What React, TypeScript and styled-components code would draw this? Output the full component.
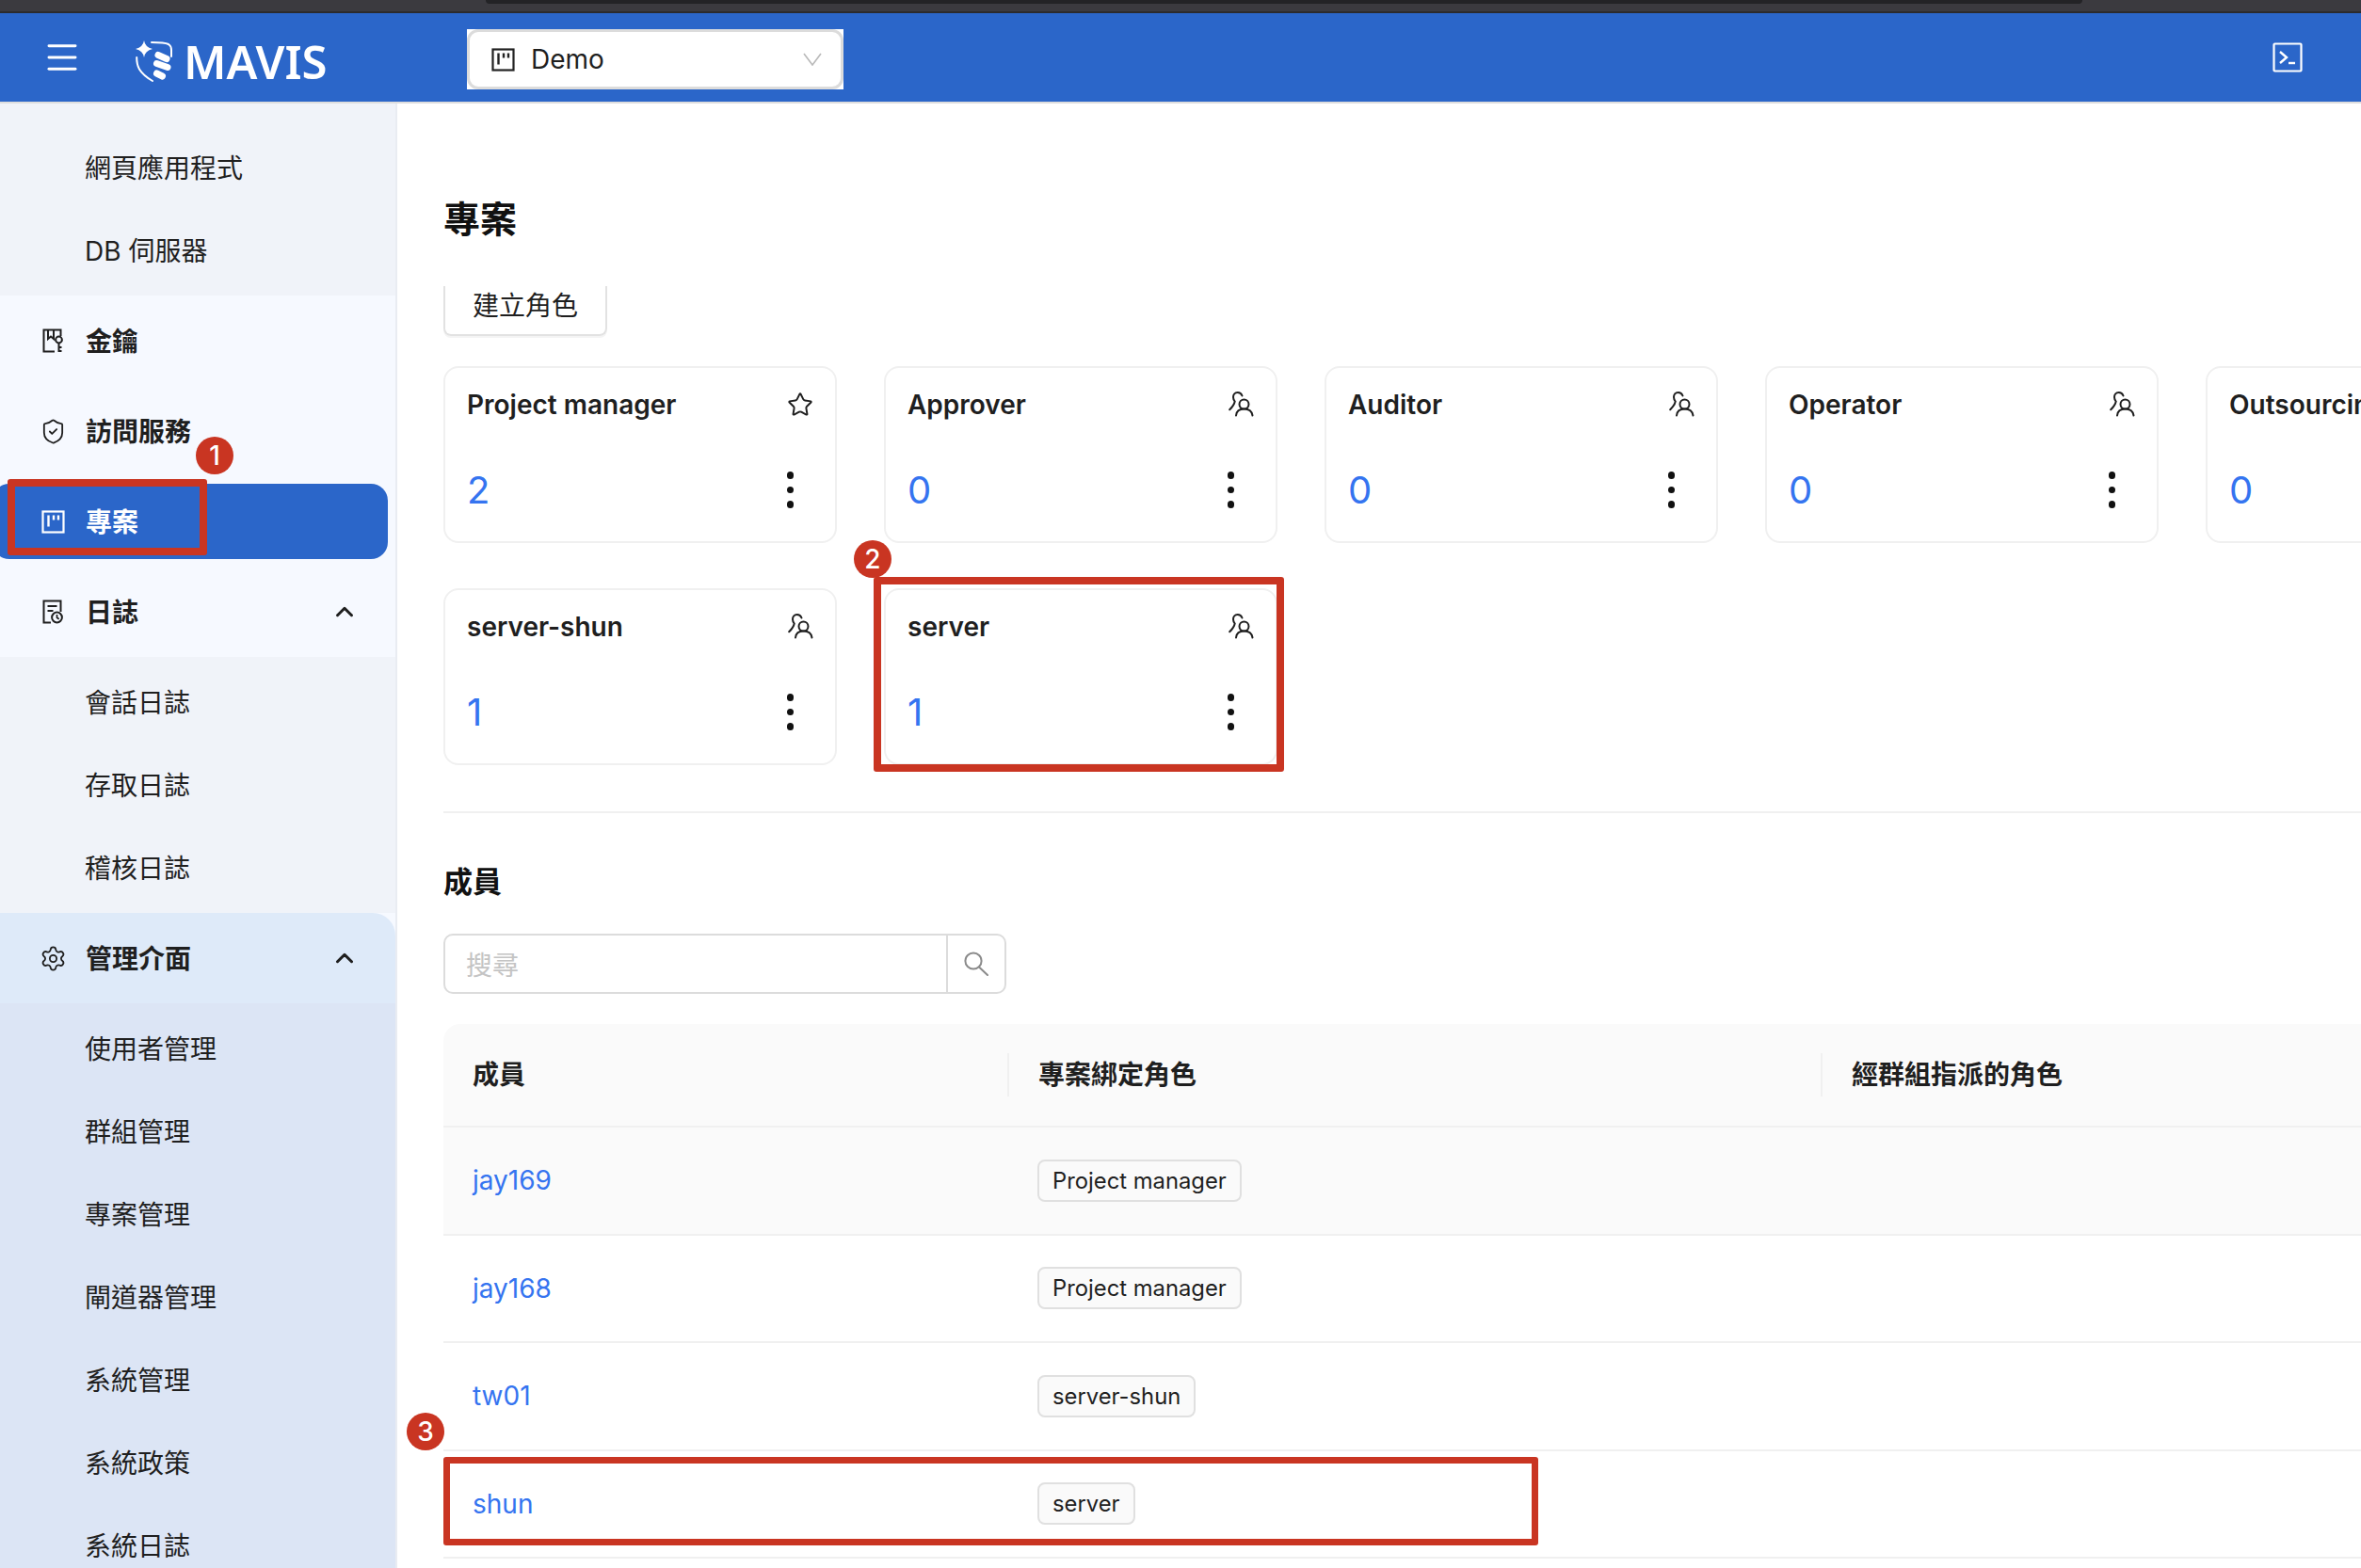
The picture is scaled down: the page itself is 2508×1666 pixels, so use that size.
import React from "react";
import styled, { createGlobalStyle } from "styled-components";
import { ChevronUp, Menu, Settings, ShieldCheck, Star } from "lucide-react";

const GlobalStyle = createGlobalStyle`
  html, body {
    margin: 0;
    padding: 0;
    background: #fff;
    font-family: Inter, "Noto Sans CJK TC", sans-serif;
    color: #1f1f1f;
  }
  * { box-sizing: border-box; }
`;

const Page = styled.div`
  width: 2508px;
  height: 1666px;
  overflow: hidden;
  display: flex;
  flex-direction: column;
`;

const Chrome = styled.div`
  height: 14px;
  flex: none;
  background: #3b3a3f;
  border-bottom: 2px solid #2b2b2d;
  padding: 0 296px 0 516px;
`;

const ChromeTab = styled.div`
  height: 4px;
  background: #232326;
  border-radius: 0 0 6px 6px;
`;

const Header = styled.header`
  height: 96px;
  flex: none;
  display: flex;
  align-items: center;
  background: #2b66c9;
  border-bottom: 2px solid #dedede;
  padding-left: 45px;
  padding-right: 62px;
  color: #fff;
`;

const Logo = styled.div`
  display: flex;
  align-items: center;
  gap: 12px;
  margin-left: 57px;
  width: 352px;
  padding-top: 8px;
`;

const LogoText = styled.span`
  font-family: "Noto Sans", sans-serif;
  font-size: 49px;
  font-weight: 600;
  line-height: 1;
  color: #fff;
`;

const SelectFrame = styled.div`
  width: 400px;
  height: 64px;
  margin-top: 4px;
  background: #fff;
`;

const SelectBox = styled.div`
  height: 100%;
  border: 3px solid #dcdcdc;
  border-radius: 12px;
  display: flex;
  align-items: center;
  padding: 0 20px 0 23px;
  gap: 17px;
  color: #1f1f1f;
  font-size: 28px;
`;

const SelectText = styled.span`
  flex: 1;
`;

const TerminalWrap = styled.div`
  margin-left: auto;
  display: flex;
`;

const Body = styled.div`
  flex: 1;
  display: flex;
  min-height: 0;
`;

const Side = styled.aside`
  width: 422px;
  flex: none;
  background: #f6f9ff;
  border-right: 2px solid #e9ecf2;
  overflow: hidden;
`;

const SubGroup = styled.div<{ $first?: boolean; $admin?: boolean }>`
  background: ${(p) => (p.$admin ? "#dce5f5" : "#f0f3f9")};
  padding: ${(p) => (p.$first ? "24px" : "4px")} 0 4px;
`;

const SubItem = styled.div`
  height: 88px;
  display: flex;
  align-items: center;
  padding: 0 0 2px 90px;
  font-size: 28px;
  color: #1f1f1f;
`;

const NavItem = styled.div<{ $active?: boolean; $open?: boolean }>`
  position: relative;
  height: ${(p) => (p.$active ? "80px" : "96px")};
  margin: ${(p) => (p.$active ? "8px 8px 8px -8px" : "0")};
  padding-left: ${(p) => (p.$active ? "53px" : "45px")};
  padding-right: 39px;
  display: flex;
  align-items: center;
  gap: 24px;
  font-size: 28px;
  font-weight: 600;
  color: ${(p) => (p.$active ? "#fff" : "#1f1f1f")};
  background: ${(p) => (p.$active ? "#2b66c9" : p.$open ? "#deeaf9" : "transparent")};
  border-radius: ${(p) => (p.$active ? "18px" : p.$open ? "0 24px 0 0" : "0")};
`;

const NavIcon = styled.span`
  width: 22px;
  height: 28px;
  flex: none;
  display: flex;
  align-items: center;
  justify-content: center;
  svg {
    flex: none;
  }
`;

const NavLabel = styled.span`
  flex: 1;
  padding-bottom: 2px;
`;

const Main = styled.main`
  flex: 1;
  min-width: 0;
  overflow: hidden;
  padding: 103px 0 0 49px;
`;

const Title = styled.h1`
  margin: 0;
  font-size: 39px;
  line-height: 40px;
  font-weight: 700;
  color: #111;
`;

const CutButton = styled.div`
  width: 174px;
  height: 53px;
  margin-top: 51px;
  border: 2px solid #e2e2e2;
  border-top: none;
  border-radius: 0 0 8px 8px;
  display: flex;
  align-items: center;
  justify-content: center;
  font-size: 28px;
  padding-bottom: 14px;
  color: #1f1f1f;
  box-shadow: 0 2px 0 #f4f4f4;
`;

const CardGrid = styled.div`
  display: grid;
  grid-template-columns: repeat(5, 418px);
  grid-auto-rows: 188px;
  gap: 48px 50px;
  margin-top: 32px;
`;

const Card = styled.div`
  position: relative;
  border: 2px solid #f0f0f0;
  border-radius: 16px;
  padding: 18.5px 23px 0 23px;
  display: flex;
  flex-direction: column;
  background: #fff;
`;

const CardTop = styled.div`
  display: flex;
  align-items: center;
  justify-content: space-between;
  height: 40px;
`;

const CardName = styled.span`
  font-size: 28px;
  font-weight: 600;
  white-space: nowrap;
  color: #1f1f1f;
`;

const CardBottom = styled.div`
  display: flex;
  align-items: center;
  justify-content: space-between;
  margin-top: 39px;
  height: 64px;
`;

const CardCount = styled.span`
  font-size: 40px;
  font-weight: 400;
  color: #3574f0;
`;

const Kebab = styled.span`
  display: flex;
  flex-direction: column;
  gap: 8px;
  margin-right: 21px;
`;

const Dot = styled.i`
  width: 7.5px;
  height: 7.5px;
  border-radius: 50%;
  background: #111;
  display: block;
`;

const Divider = styled.div`
  height: 2px;
  background: #f0f0f0;
  margin-top: 49px;
`;

const SectionTitle = styled.h2`
  margin: 53px 0 0;
  font-size: 31px;
  line-height: 40px;
  font-weight: 700;
  color: #111;
`;

const SearchBox = styled.div`
  width: 598px;
  height: 64px;
  margin-top: 35px;
  border: 2px solid #dcdcdc;
  border-radius: 10px;
  display: flex;
  align-items: stretch;
`;

const SearchInput = styled.div`
  flex: 1;
  display: flex;
  align-items: center;
  padding-left: 22px;
  font-size: 28px;
  color: #c4c4c4;
  border-right: 2px solid #dcdcdc;
`;

const SearchButton = styled.div`
  width: 60px;
  display: flex;
  align-items: center;
  justify-content: center;
  color: #8a8a8a;
`;

const Table = styled.div`
  margin-top: 32px;
`;

const cols = "599px 864px 1fr";

const HeadRow = styled.div`
  height: 110px;
  display: grid;
  grid-template-columns: ${cols};
  align-items: center;
  background: #fafafa;
  border-bottom: 2px solid #f0f0f0;
  border-top-left-radius: 18px;
`;

const HeadCell = styled.div<{ $sep?: boolean }>`
  position: relative;
  padding-left: 31px;
  font-size: 28px;
  font-weight: 600;
  line-height: 46px;
  ${(p) => (p.$sep ? "border-left: 2px solid #f0f0f0;" : "")}
`;

const Row = styled.div<{ $hover?: boolean }>`
  position: relative;
  height: 114.5px;
  display: grid;
  grid-template-columns: ${cols};
  align-items: center;
  background: ${(p) => (p.$hover ? "#fafafa" : "#fff")};
  border-bottom: 2px solid #f0f0f0;
`;

const MemberLink = styled.a`
  padding-left: 31px;
  font-size: 28px;
  color: #3574f0;
`;

const TagCell = styled.div`
  padding-left: 32px;
`;

const Tag = styled.span`
  display: inline-flex;
  align-items: center;
  height: 45px;
  padding: 0 14px;
  font-size: 23.8px;
  background: #fafafa;
  border: 2px solid #e0e0e0;
  border-radius: 8px;
  color: #1f1f1f;
`;

const MarkBox = styled.div<{ $kind: "nav" | "card" | "row" }>`
  position: absolute;
  border: ${(p) => (p.$kind === "row" ? "7px" : "8px")} solid #c93522;
  border-radius: 3px;
  pointer-events: none;
  ${(p) =>
    p.$kind === "nav"
      ? "left: 16px; top: -5px; width: 212px; height: 81px;"
      : p.$kind === "card"
      ? "left: -13px; top: -14px; width: 436px; height: 207px;"
      : "left: 0; top: 6.5px; width: 1163px; height: 94px;"}
`;

const MarkBadge = styled.span<{ $kind: "nav" | "card" | "row" }>`
  position: absolute;
  width: 40px;
  height: 40px;
  border-radius: 50%;
  background: #c93522;
  color: #fff;
  font-size: 28px;
  font-weight: 500;
  display: flex;
  align-items: center;
  justify-content: center;
  ${(p) =>
    p.$kind === "nav"
      ? "left: 216px; top: -50px;"
      : p.$kind === "card"
      ? "left: -34px; top: -53px;"
      : "left: -39px; top: -41px;"}
`;

const ProjectIcon = ({ color = "currentColor" }: { color?: string }) => (
  <svg width="25" height="25" viewBox="0 0 25 25" fill="none" stroke={color} strokeWidth="2.2" style={{ flex: "none" }}>
    <rect x="1.5" y="1.5" width="22" height="22" />
    <path d="M7.5 5.5v12M13 5.5v5M18 5.5v5" strokeWidth="2.4" />
  </svg>
);

const SelectChevron = () => (
  <svg width="20" height="14" viewBox="0 0 20 14" fill="none" stroke="#b9b9b9" strokeWidth="1.6" style={{ flex: "none" }}>
    <path d="M1 1l9 12 9-12" />
  </svg>
);

const TerminalIcon = () => (
  <svg width="32" height="32" viewBox="0 0 32 32" fill="none" stroke="#fff" strokeWidth="2.2">
    <rect x="1.5" y="1.5" width="29" height="29" rx="1" />
    <path d="M8 10l7 6-7 6" strokeWidth="2.4" />
    <path d="M17 22h7" strokeWidth="2.4" />
  </svg>
);

const KeyIcon = () => (
  <svg width="22" height="26" viewBox="0 0 22 26" fill="none" stroke="#1f1f1f" strokeWidth="2">
    <path d="M13 24.5H1.5V1.5H19.5V8" />
    <path d="M6 1.5V11L9 8.5L12 11V1.5" />
    <circle cx="17.5" cy="12" r="3.4" />
    <path d="M17.5 15.5V25M17.5 20h3M17.5 24h3" />
  </svg>
);

const LogIcon = () => (
  <svg width="22" height="26" viewBox="0 0 22 26" fill="none" stroke="#1f1f1f" strokeWidth="2">
    <path d="M9 24.5H1.5V1.5H19.5V13" />
    <path d="M5.5 7h10M5.5 12h6" />
    <circle cx="15.5" cy="19" r="5.4" />
    <path d="M15.5 16v3.2l2.2 1.6" strokeWidth="1.7" />
  </svg>
);

const RoleIcon = () => (
  <svg width="27" height="27" viewBox="0 0 27 27" fill="none" stroke="#1f1f1f" strokeWidth="2" strokeLinecap="round">
    <circle cx="16.5" cy="13.5" r="5" />
    <path d="M8 25.5c.4-4.6 3.6-7 8.5-7s8.4 2.4 9 7" />
    <path d="M14.5 4.5C13.5 2 11.5 1 9.7 1 6.5 1 5 3.5 5 6c0 2 .8 3.3 1.7 4.5C6 14.5 3.5 17 1.2 19.3" />
  </svg>
);

const SearchIcon = () => (
  <svg width="26" height="26" viewBox="0 0 26 26" fill="none" stroke="currentColor" strokeWidth="2" strokeLinecap="round">
    <circle cx="10" cy="10" r="8.6" />
    <path d="M16 16.5L25 25" />
  </svg>
);

const MavisMark = () => (
  <svg width="39" height="44" viewBox="0 0 39 44" fill="none" stroke="#fff" strokeLinecap="round" style={{ flex: "none" }}>
    <path d="M9 0Q10 7 18 9Q10 11 9 18Q8 11 0 9Q8 7 9 0Z" fill="#fff" stroke="none" />
    <path d="M17 2C24 2 32 2.5 35 4C37.5 5.5 38 7 38 10V17" strokeWidth="2" />
    <path d="M1.2 18C1.2 23 2 27 4 30.5C7 35.5 12 39.5 18 43" strokeWidth="2" />
    <path d="M24 15.5L33 19.5M22.5 24.5L34 28.5M22.5 35L28.5 38" strokeWidth="7" />
  </svg>
);

type Role = { name: string; count: number; star?: boolean; marked?: boolean };

const roles: Role[] = [
  { name: "Project manager", count: 2, star: true },
  { name: "Approver", count: 0 },
  { name: "Auditor", count: 0 },
  { name: "Operator", count: 0 },
  { name: "Outsourcing", count: 0 },
  { name: "server-shun", count: 1 },
  { name: "server", count: 1, marked: true },
];

const members = [
  { name: "jay169", role: "Project manager", hover: true },
  { name: "jay168", role: "Project manager" },
  { name: "tw01", role: "server-shun" },
  { name: "shun", role: "server", marked: true },
];

const logItems = ["會話日誌", "存取日誌", "稽核日誌"];
const adminItems = ["使用者管理", "群組管理", "專案管理", "閘道器管理", "系統管理", "系統政策", "系統日誌"];

export default function App() {
  return (
    <Page>
      <GlobalStyle />
      <Chrome>
        <ChromeTab />
      </Chrome>
      <Header>
        <Menu size={42} strokeWidth={1.7} color="#fff" />
        <Logo>
          <MavisMark />
          <LogoText>MAVIS</LogoText>
        </Logo>
        <SelectFrame>
          <SelectBox>
            <ProjectIcon color="#222" />
            <SelectText>Demo</SelectText>
            <SelectChevron />
          </SelectBox>
        </SelectFrame>
        <TerminalWrap>
          <TerminalIcon />
        </TerminalWrap>
      </Header>
      <Body>
        <Side>
          <SubGroup $first>
            <SubItem>網頁應用程式</SubItem>
            <SubItem>DB 伺服器</SubItem>
          </SubGroup>
          <NavItem>
            <NavIcon>
              <KeyIcon />
            </NavIcon>
            <NavLabel>金鑰</NavLabel>
          </NavItem>
          <NavItem>
            <NavIcon>
              <ShieldCheck size={29} strokeWidth={1.5} />
            </NavIcon>
            <NavLabel>訪問服務</NavLabel>
          </NavItem>
          <NavItem $active>
            <NavIcon>
              <ProjectIcon color="#fff" />
            </NavIcon>
            <NavLabel>專案</NavLabel>
            <MarkBox $kind="nav" />
            <MarkBadge $kind="nav">1</MarkBadge>
          </NavItem>
          <NavItem>
            <NavIcon>
              <LogIcon />
            </NavIcon>
            <NavLabel>日誌</NavLabel>
            <ChevronUp size={30} strokeWidth={2.4} />
          </NavItem>
          <SubGroup>
            {logItems.map((item) => (
              <SubItem key={item}>{item}</SubItem>
            ))}
          </SubGroup>
          <NavItem $open>
            <NavIcon>
              <Settings size={29} strokeWidth={1.5} />
            </NavIcon>
            <NavLabel>管理介面</NavLabel>
            <ChevronUp size={30} strokeWidth={2.4} />
          </NavItem>
          <SubGroup $admin>
            {adminItems.map((item) => (
              <SubItem key={item}>{item}</SubItem>
            ))}
          </SubGroup>
        </Side>
        <Main>
          <Title>專案</Title>
          <CutButton>建立角色</CutButton>
          <CardGrid>
            {roles.map((role) => (
              <Card key={role.name}>
                <CardTop>
                  <CardName>{role.name}</CardName>
                  {role.star ? <Star size={28} strokeWidth={1.7} /> : <RoleIcon />}
                </CardTop>
                <CardBottom>
                  <CardCount>{role.count}</CardCount>
                  <Kebab>
                    <Dot />
                    <Dot />
                    <Dot />
                  </Kebab>
                </CardBottom>
                {role.marked && (
                  <>
                    <MarkBox $kind="card" />
                    <MarkBadge $kind="card">2</MarkBadge>
                  </>
                )}
              </Card>
            ))}
          </CardGrid>
          <Divider />
          <SectionTitle>成員</SectionTitle>
          <SearchBox>
            <SearchInput>搜尋</SearchInput>
            <SearchButton>
              <SearchIcon />
            </SearchButton>
          </SearchBox>
          <Table>
            <HeadRow>
              <HeadCell>成員</HeadCell>
              <HeadCell $sep>專案綁定角色</HeadCell>
              <HeadCell $sep>經群組指派的角色</HeadCell>
            </HeadRow>
            {members.map((m) => (
              <Row key={m.name} $hover={m.hover}>
                <MemberLink>{m.name}</MemberLink>
                <TagCell>
                  <Tag>{m.role}</Tag>
                </TagCell>
                {m.marked && (
                  <>
                    <MarkBox $kind="row" />
                    <MarkBadge $kind="row">3</MarkBadge>
                  </>
                )}
              </Row>
            ))}
          </Table>
        </Main>
      </Body>
    </Page>
  );
}
